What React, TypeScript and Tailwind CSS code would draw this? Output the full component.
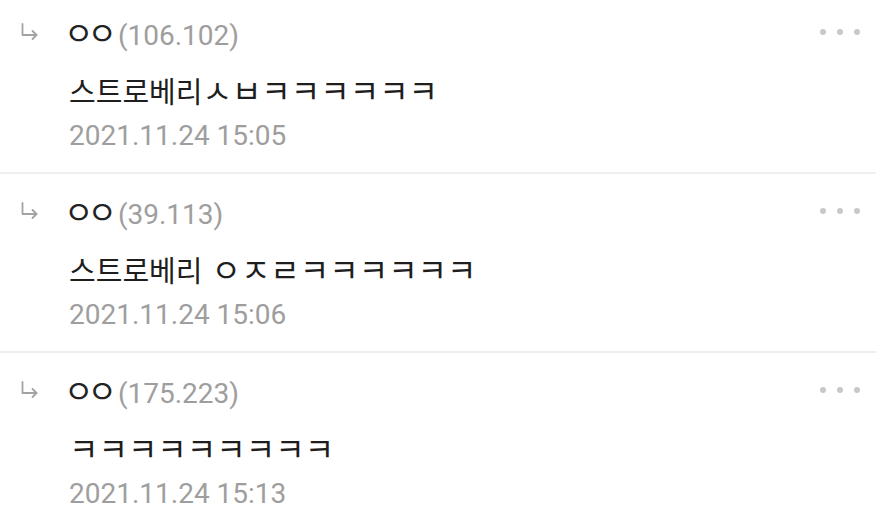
import React from "react";

const rows = [
  { ip: "(106.102)", text: "스트로베리ㅅㅂㅋㅋㅋㅋㅋㅋ", date: "2021.11.24 15:05" },
  { ip: "(39.113)", text: "스트로베리 ㅇㅈㄹㅋㅋㅋㅋㅋㅋ", date: "2021.11.24 15:06" },
  { ip: "(175.223)", text: "ㅋㅋㅋㅋㅋㅋㅋㅋㅋ", date: "2021.11.24 15:13" },
];

const KR = { fontFamily: '"Noto Sans CJK KR", "Noto Sans", sans-serif' };
const RB = { fontFamily: 'Roboto, "Noto Sans CJK KR", sans-serif' };

function isJamo(c: string) {
  const code = c.charCodeAt(0);
  return code >= 0x3131 && code <= 0x318e;
}

function KText({ text }: { text: string }) {
  return (
    <>
      {Array.from(text).map((c, i) =>
        isJamo(c) ? (
          <span key={i} className="text-[32px]">{c}</span>
        ) : c === " " ? (
          <span key={i} className="inline-block w-[9px]"> </span>
        ) : (
          <span key={i}>{c}</span>
        )
      )}
    </>
  );
}

function Arrow() {
  return (
    <svg width="20" height="20" viewBox="0 0 20 20" fill="none" stroke="#a3a3a3" strokeWidth="1.8" strokeLinecap="round" strokeLinejoin="round">
      <path d="M2.5 2 V13 H16.5" />
      <path d="M12.5 9 L16.5 13 L12.5 17" />
    </svg>
  );
}

export default function App() {
  return (
    <div className="w-[876px] h-[522px] overflow-hidden bg-white">
      <div className="-mt-[5px]">
        {rows.map((r, i) => (
          <div key={i} className={`pl-[17px] ${i < 2 ? "border-b-2 border-[#efefef]" : ""}`}>
            <div className="flex flex-col pt-[19px] pb-[18px]">
              <div className="flex items-center h-[36px]">
                <div className="w-[52px] pl-[3px] flex items-center"><Arrow /></div>
                <div className="flex items-baseline leading-none">
                  <span style={KR} className="text-[#222] text-[32px] tracking-[-6px] -ml-[5px]">ㅇㅇ</span>
                  <span style={RB} className="text-[#9e9e9e] text-[28px] ml-[7px]">{r.ip}</span>
                </div>
                <div className="ml-auto mr-[16px] flex gap-[11px]">
                  <span className="w-[6px] h-[6px] rounded-full bg-[#c8c8c8]" />
                  <span className="w-[6px] h-[6px] rounded-full bg-[#c8c8c8]" />
                  <span className="w-[6px] h-[6px] rounded-full bg-[#c8c8c8]" />
                </div>
              </div>
              <div style={KR} className="pl-[52px] mt-[19px] text-[29px] leading-[40px] text-[#1e1e1e] whitespace-nowrap">
                <KText text={r.text} />
              </div>
              <div style={RB} className="pl-[52px] mt-[8px] text-[28px] leading-[36px] text-[#9e9e9e]">{r.date}</div>
            </div>
          </div>
        ))}
      </div>
    </div>
  );
}
